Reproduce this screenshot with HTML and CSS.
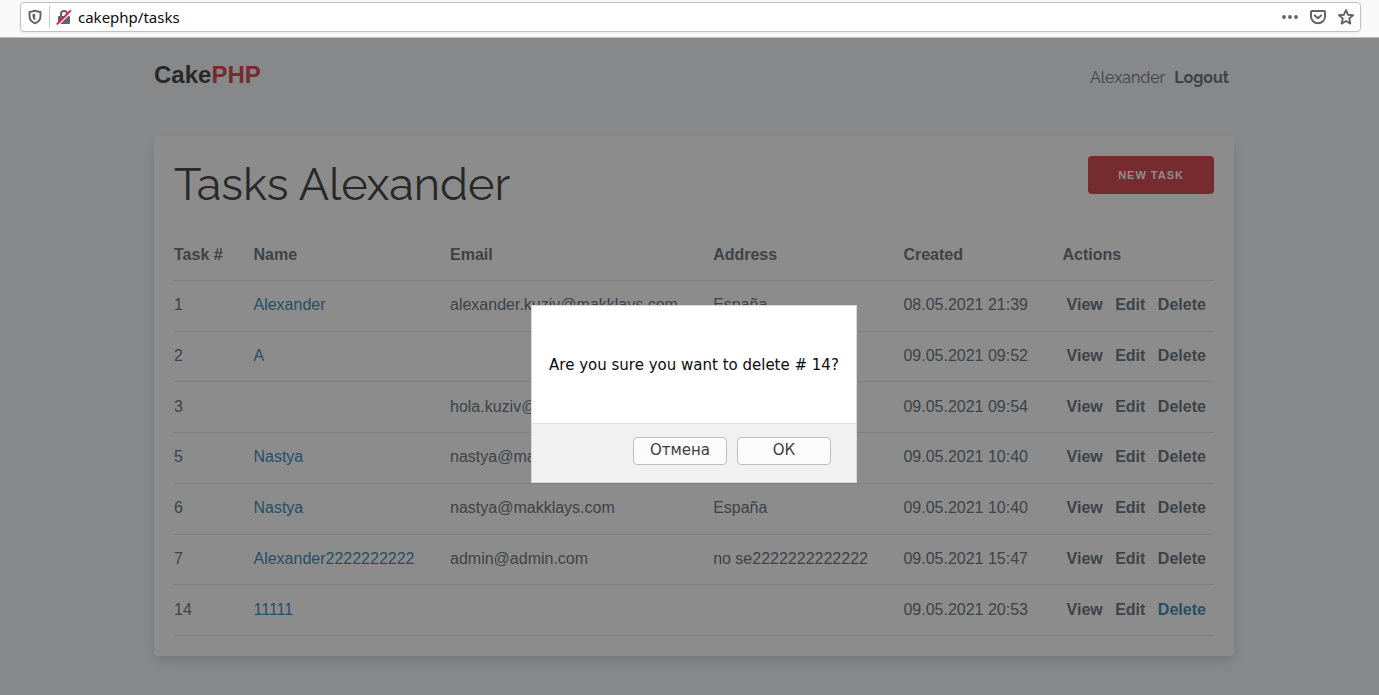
FILE: index.html
```
<!DOCTYPE html>
<html lang="en">
<head>
<meta charset="utf-8">
<title>Tasks</title>
<link rel="stylesheet" href="styles.css">
</head>
<body>
<div class="toolbar">
  <div class="urlbar">
    <button class="icon-btn shield" aria-label="Tracking protection">
      <svg width="16" height="16" viewBox="0 0 16 16" fill="none"><path d="M8 1.700c1.900.9 3.600 1.200 5.500 1.300V7c0 3.500-2.100 6.100-5.500 7.300C4.600 13.100 2.500 10.500 2.500 7V3C4.400 2.900 6.100 2.600 8 1.700z" stroke="#636363" stroke-width="1.900" stroke-linejoin="round"/><path d="M8.200 4.600c-.9.400-1.700.500-2.700.600V7.300c0 1.900 1 3.300 2.700 4.100z" fill="#636363"/></svg>
    </button>
    <button class="icon-btn lock" aria-label="Connection is not secure">
      <svg width="16" height="16" viewBox="0 0 16 16" fill="none"><path d="M5 7.500V5a3 3 0 0 1 6 0v2.500" stroke="#636363" stroke-width="2"/><rect x="2" y="7" width="12" height="8" rx="1" fill="#636363"/><path d="M2.600 15.600L15.600 2.600" stroke="#fff" stroke-width="1.400"/><path d="M1.300 14.800L14.300 1.800" stroke="#ff0f4f" stroke-width="1.900" stroke-linecap="round"/></svg>
    </button>
    <input class="address" type="text" value="cakephp/tasks" aria-label="Address">
    <div class="url-actions">
      <button class="icon-btn" aria-label="Page actions">
        <svg width="16" height="16" viewBox="0 0 16 16" fill="#636363"><circle cx="2" cy="8" r="1.900"/><circle cx="8" cy="8" r="1.900"/><circle cx="14" cy="8" r="1.900"/></svg>
      </button>
      <button class="icon-btn" aria-label="Save to Pocket">
        <svg width="16" height="16" viewBox="0 0 16 16" fill="none" stroke="#636363" stroke-width="2" stroke-linecap="round" stroke-linejoin="round"><path d="M2 2h12a1 1 0 0 1 1 1v4.500a7 6.700 0 0 1-14 0V3a1 1 0 0 1 1-1z"/><path d="M4.900 6.400L8 9.300l3.100-2.900"/></svg>
      </button>
      <button class="icon-btn" aria-label="Bookmark this page">
        <svg width="16" height="16" viewBox="0 0 16 16" fill="none" stroke="#636363" stroke-width="1.900" stroke-linejoin="round"><path d="M8 1.200l2 4.500 5 .5-3.750 3.300 1.100 5.100L8 12l-4.350 2.600 1.100-5.100L1 6.200l5-.5z"/></svg>
      </button>
    </div>
  </div>
</div>
<div class="page">
  <div class="container">
    <nav class="top-nav">
      <a class="brand" href="#">Cake<span class="brand-red">PHP</span></a>
      <div class="user-links"><span>Alexander</span><a href="#">Logout</a></div>
    </nav>
    <main class="card">
      <div class="card-head">
        <h1>Tasks Alexander</h1>
        <button class="new-task">NEW TASK</button>
      </div>
      <table class="tasks">
        <colgroup><col class="c-id"><col class="c-name"><col class="c-email"><col class="c-address"><col class="c-created"><col></colgroup>
        <thead><tr><th>Task #</th><th>Name</th><th>Email</th><th>Address</th><th>Created</th><th>Actions</th></tr></thead>
        <tbody>
          <tr><td>1</td><td><a href="#">Alexander</a></td><td>alexander.kuziv@makklays.com</td><td>España</td><td>08.05.2021 21:39</td><td class="actions"><a href="#">View</a> <a href="#">Edit</a> <a href="#">Delete</a></td></tr>
          <tr><td>2</td><td><a href="#">A</a></td><td></td><td></td><td>09.05.2021 09:52</td><td class="actions"><a href="#">View</a> <a href="#">Edit</a> <a href="#">Delete</a></td></tr>
          <tr><td>3</td><td></td><td>hola.kuziv@</td><td></td><td>09.05.2021 09:54</td><td class="actions"><a href="#">View</a> <a href="#">Edit</a> <a href="#">Delete</a></td></tr>
          <tr><td>5</td><td><a href="#">Nastya</a></td><td>nastya@makklays.com</td><td></td><td>09.05.2021 10:40</td><td class="actions"><a href="#">View</a> <a href="#">Edit</a> <a href="#">Delete</a></td></tr>
          <tr><td>6</td><td><a href="#">Nastya</a></td><td>nastya@makklays.com</td><td>España</td><td>09.05.2021 10:40</td><td class="actions"><a href="#">View</a> <a href="#">Edit</a> <a href="#">Delete</a></td></tr>
          <tr><td>7</td><td><a href="#">Alexander2222222222</a></td><td>admin@admin.com</td><td>no se2222222222222</td><td>09.05.2021 15:47</td><td class="actions"><a href="#">View</a> <a href="#">Edit</a> <a href="#">Delete</a></td></tr>
          <tr><td>14</td><td><a href="#">11111</a></td><td></td><td></td><td>09.05.2021 20:53</td><td class="actions"><a href="#">View</a> <a href="#">Edit</a> <a class="current" href="#">Delete</a></td></tr>
        </tbody>
      </table>
    </main>
  </div>
  <div class="overlay">
    <div class="modal" role="dialog" aria-modal="true" aria-labelledby="modal-text">
      <p class="modal-text" id="modal-text">Are you sure you want to delete # 14?</p>
      <div class="modal-foot"><button>Отмена</button><button>ОК</button></div>
    </div>
  </div>
</div>
</body>
</html>
```
FILE: styles.css
```
* { box-sizing: border-box; }
body {
  margin: 0;
  min-height: 100vh;
  display: flex;
  flex-direction: column;
  font: 16px/25px "Liberation Sans", Arial, sans-serif;
  color: #606c76;
}
a { color: #2f85ae; text-decoration: none; }
button { font: inherit; cursor: pointer; }

.toolbar {
  padding: 2px 18px 5px 20px;
  background: #f9f9fa;
  border-bottom: 1px solid #bebebe;
}
.urlbar {
  display: flex;
  align-items: center;
  height: 30px;
  padding: 0 6px;
  background: #fff;
  border: 1px solid #c1c1c1;
  border-radius: 4px;
  box-shadow: 0 1px 3px rgba(0, 0, 0, .06);
}
.icon-btn {
  display: flex;
  padding: 0;
  border: 0;
  background: none;
}
.shield {
  padding: 3px 6px 3px 0;
  border-right: 1px solid #c6c6c6;
}
.lock { margin: 0 6px; }
.address {
  flex: 1;
  min-width: 0;
  padding: 0;
  border: 0;
  outline: 0;
  font: 15px/20px "Noto Sans", sans-serif;
  color: #0c0c0d;
  background: none;
}
.url-actions { display: flex; gap: 12px; }

.page {
  position: relative;
  flex: 1;
  padding: 0 20px 39px 29px;
  background: #f5f7fa;
}
.container { max-width: 1080px; margin: 0 auto; }
.top-nav {
  display: flex;
  justify-content: space-between;
  align-items: center;
  height: 98px;
  padding: 0 5px 26px 0;
}
.brand { font-size: 24px; font-weight: 700; color: #363637; }
.brand-red { color: #d33c43; }
.user-links {
  display: flex;
  gap: 9px;
  padding-top: 7px;
  font-family: Raleway, Lato, sans-serif;
  font-size: 16px;
  font-weight: 400;
}
.user-links a { color: #606c76; font-weight: 700; }

.card {
  padding: 20px;
  background: #fff;
  border-radius: 4px;
  box-shadow: 0 7px 14px 0 rgba(60, 66, 87, .1), 0 3px 6px 0 rgba(0, 0, 0, .07);
}
.card-head {
  display: flex;
  justify-content: space-between;
  align-items: flex-start;
  margin-bottom: 18px;
}
h1 {
  margin: 0;
  font: 400 45px/57px Raleway, Lato, sans-serif;
  color: #363637;
}
.new-task {
  height: 38px;
  padding: 0 30px;
  border: 0;
  border-radius: 4px;
  background: #d33c43;
  color: #fff;
  font-size: 11px;
  font-weight: 700;
  letter-spacing: 1px;
}

.tasks {
  width: 100%;
  height: 405px;
  table-layout: fixed;
  border-spacing: 0;
}
.c-id { width: 6.2%; }
.c-name { width: 18.9%; }
.c-email { width: 25.3%; }
.c-address { width: 18.3%; }
.c-created { width: 15.3%; }
th, td {
  padding: 11px 0 13px 15px;
  border-bottom: 1px solid #e1e1e1;
  text-align: left;
  white-space: nowrap;
}
th:first-child, td:first-child { padding-left: 0; }
.actions a { margin: 0 4px; font-weight: 700; color: #606c76; }
.actions .current { color: #2f85ae; }

.overlay {
  position: absolute;
  inset: 0;
  display: flex;
  justify-content: center;
  align-items: center;
  padding: 54px 0 0 9px;
  background: rgba(26, 26, 26, .5);
}
.modal {
  width: 326px;
  border: 1px solid #d9d9d9;
  background: #fff;
  font-family: "DejaVu Sans", sans-serif;
  font-size: 15px;
}
.modal-text {
  margin: 0;
  padding: 47px 0 45px;
  text-align: center;
  font-size: 15px;
  color: #0c0c0d;
}
.modal-foot {
  display: flex;
  justify-content: flex-end;
  gap: 10px;
  padding: 13px 25px 17px;
  background: #f1f1f1;
  border-top: 1px solid #e1e1e1;
}
.modal-foot button {
  width: 94px;
  height: 28px;
  padding: 0;
  border: 1px solid #bfbfbf;
  border-radius: 4px;
  background: #fcfcfc;
  color: #3d3d3d;
}
```
